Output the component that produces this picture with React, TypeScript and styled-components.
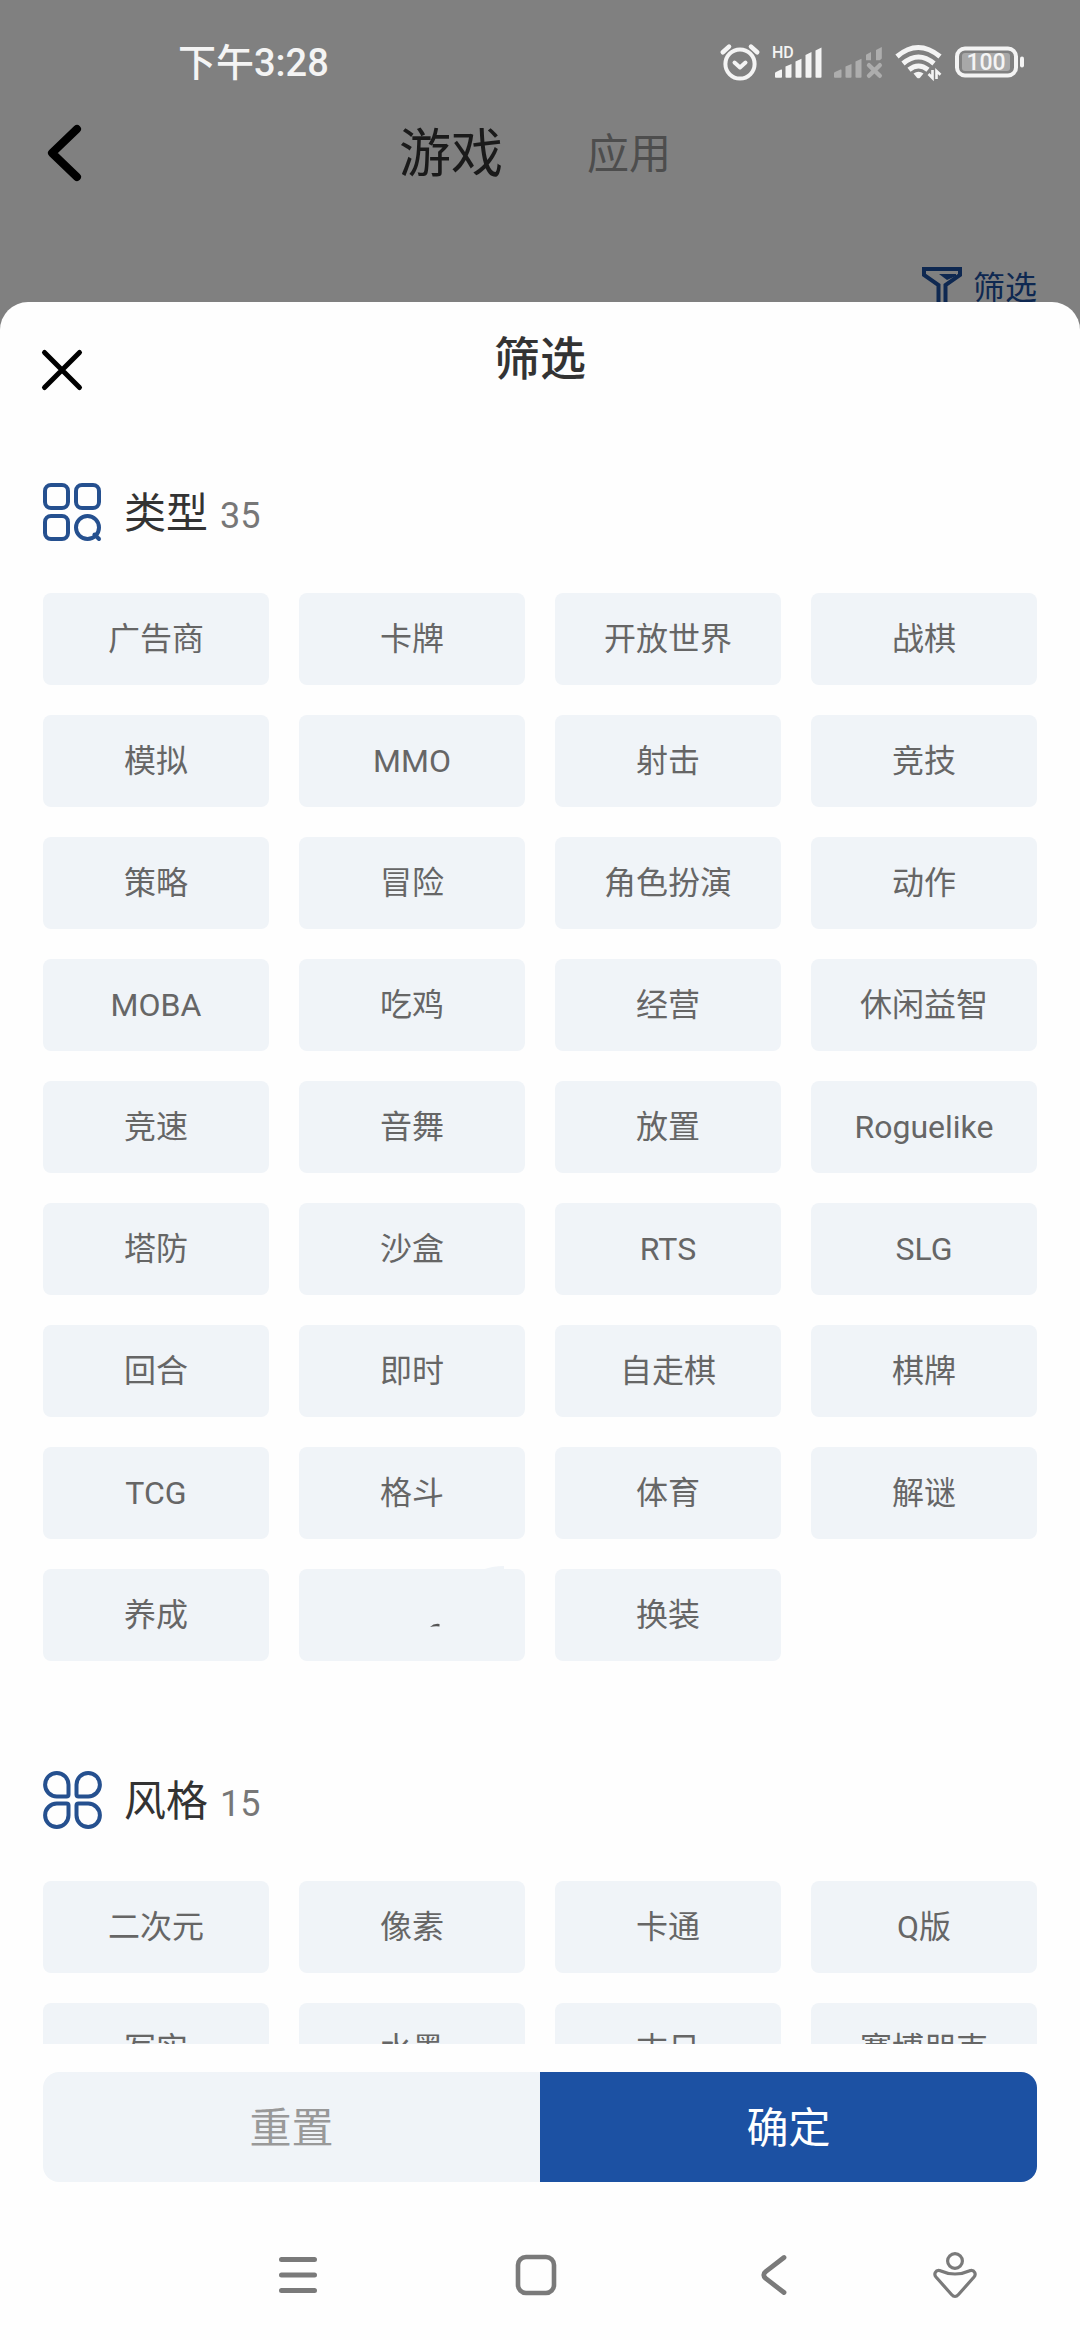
import React from "react";
import styled, { createGlobalStyle } from "styled-components";

const GlobalStyle = createGlobalStyle`
  * { box-sizing: border-box; }
  body {
    margin: 0;
    background: #808080;
    font-family: Roboto, "Noto Sans CJK SC", sans-serif;
  }
  button {
    margin: 0;
    padding: 0;
    border: 0;
    background: none;
    color: inherit;
    font: inherit;
    cursor: pointer;
  }
  h1, h2 { margin: 0; font-weight: 400; }
  svg { display: block; flex: none; overflow: visible; }
`;

const Screen = styled.div`
  display: flex;
  flex-direction: column;
  height: 100vh;
  overflow: hidden;
  background: #808080;
`;

const StatusBar = styled.div`
  display: flex;
  align-items: center;
  justify-content: space-between;
  flex: none;
  height: 100px;
  padding: 24px 55px 0 178px;
  color: #f4f4f4;
`;

const Clock = styled.time`
  padding-top: 2px;
  font-size: 38px;
  font-weight: 500;
  line-height: 44px;
`;

const StatusIcons = styled.div`
  display: flex;
  align-items: center;
  gap: 12px;
`;

const TopBar = styled.header`
  display: grid;
  grid-template-columns: 1fr auto 1fr;
  align-items: center;
  flex: none;
  height: 106px;
  padding: 0 50px 0 40px;
`;

const IconButton = styled.button`
  display: flex;
  align-items: center;
  justify-self: start;
`;

const Tabs = styled.nav`
  display: flex;
  align-items: center;
  gap: 84px;
  padding-top: 4px;
`;

const Tab = styled.button<{ $active?: boolean }>`
  color: ${(p) => (p.$active ? "#1a1a1a" : "#4d4d4d")};
  font-size: ${(p) => (p.$active ? "52px" : "42px")};
  line-height: 64px;
`;

const FilterRow = styled.div`
  display: flex;
  justify-content: flex-end;
  flex: none;
  padding: 58px 43px 0;
`;

const FilterButton = styled.button`
  display: flex;
  align-items: center;
  gap: 11px;
  height: 48px;
  color: #0e2851;
  font-size: 32px;
  line-height: 48px;
`;

const Sheet = styled.section`
  position: relative;
  display: flex;
  flex: 1;
  flex-direction: column;
  min-height: 0;
  margin-top: -10px;
  border-radius: 28px 28px 0 0;
  background: #fefefe;
`;

const SheetHeader = styled.div`
  display: grid;
  grid-template-columns: 1fr auto 1fr;
  align-items: center;
  flex: none;
  height: 110px;
  padding: 0 42px;
`;

const CloseButton = styled(IconButton)`
  align-self: end;
  height: 84px;
`;

const SheetTitle = styled.h1`
  padding-top: 4px;
  color: #333;
  font-size: 46px;
  font-weight: 500;
  line-height: 64px;
`;

const SheetBody = styled.div`
  display: flex;
  flex: 1;
  flex-direction: column;
  gap: 110px;
  min-height: 0;
  padding: 71px 43px 0;
  overflow: hidden;
`;

const Group = styled.section`
  display: flex;
  flex: none;
  flex-direction: column;
  gap: 52px;
`;

const GroupHeader = styled.div`
  display: flex;
  align-items: center;
  gap: 22px;
  height: 58px;
`;

const GroupTitle = styled.h2`
  display: flex;
  align-items: baseline;
  gap: 12px;
  padding-top: 6px;
  color: #333;
  font-size: 42px;
  line-height: 58px;
`;

const Count = styled.span`
  color: #777;
  font-size: 36px;
`;

const ChipGrid = styled.div`
  display: grid;
  grid-template-columns: repeat(4, 1fr);
  gap: 30px;
`;

const Chip = styled.button`
  display: flex;
  align-items: center;
  justify-content: center;
  height: 92px;
  border-radius: 8px;
  background: #f0f4f8;
  color: #666;
  font-size: 32px;
  line-height: 48px;
`;

const Actions = styled.div`
  display: flex;
  flex: none;
  padding: 28px 43px 0;
`;

const ActionButton = styled.button<{ $primary?: boolean }>`
  flex: 1;
  height: 110px;
  padding-top: 4px;
  border-radius: ${(p) => (p.$primary ? "0 16px 16px 0" : "16px 0 0 16px")};
  background: ${(p) => (p.$primary ? "#1c51a3" : "#f0f4f8")};
  color: ${(p) => (p.$primary ? "#fff" : "#999")};
  font-size: 42px;
  line-height: 58px;
`;

const SystemNav = styled.nav`
  display: grid;
  grid-template-columns: 238fr 238fr 238fr 124fr;
  flex: none;
  height: 158px;
  padding: 28px 63px 0 179px;
  color: #7a7a7a;
`;

const NavButton = styled.button`
  display: flex;
  align-items: center;
  justify-content: center;
`;

const AlarmIcon = () => (
  <svg width="40" height="38" viewBox="0 0 40 38" fill="none" stroke="currentColor" strokeWidth="4" strokeLinecap="round" strokeLinejoin="round">
    <circle cx="20" cy="21" r="14.6" />
    <path d="M14.5 19.5l5.5 5 5.5-5" />
    <path d="M2.8 9.2L9 3.6M37.2 9.2L31 3.6" strokeWidth="4.6" />
  </svg>
);

const SignalIcon = () => (
  <svg width="50" height="34" viewBox="0 0 50 34" fill="currentColor">
    <text x="0" y="13" fontSize="16" fontWeight="500" fontFamily="Roboto, sans-serif">HD</text>
    <path d="M3 32v-3.5q0-1 1-1.4l5-2.6q1-.4 1 .6V32q0 .8-1 .8H4q-1 0-1-.8z" />
    <path d="M13.5 32V21.5l6-2.6V32q0 .8-1 .8h-4q-1 0-1-.8z" />
    <path d="M23.5 32V16.5l6-2.8V32q0 .8-1 .8h-4q-1 0-1-.8z" />
    <path d="M33.5 32V10l6-3V32q0 .8-1 .8h-4q-1 0-1-.8z" />
    <path d="M43.5 32V5.5l6-3V32q0 .8-1 .8h-4q-1 0-1-.8z" />
  </svg>
);

const NoSignalIcon = () => (
  <svg width="49" height="34" viewBox="0 0 49 34" fill="#adadad">
    <path d="M0 32v-3.5q0-1 1-1.4l5.500-2.6q1-.4 1 .6V32q0 .8-1 .8H1q-1 0-1-.8z" />
    <path d="M11.5 32V21.5l6-2.6V32q0 .8-1 .8h-4q-1 0-1-.8z" />
    <path d="M21.5 32V16.5l6-2.8V32q0 .8-1 .8h-4q-1 0-1-.8z" />
    <path d="M32 15.2V9.700l5-2.6v8.1zM42 15.2V5l5.800-3v11.5l-2 1.7z" />
    <path d="M35 20.2l10.800 10.6M45.800 20.2L35 30.8" stroke="#adadad" strokeWidth="4.4" strokeLinecap="round" />
  </svg>
);

const WifiIcon = () => (
  <svg width="48" height="36" viewBox="0 0 48 36" fill="none" stroke="currentColor" strokeWidth="5">
    <path d="M2 12.5Q23 -5.5 45 12.5" />
    <path d="M8 19.5Q23.5 6.5 39 19.5" />
    <path d="M14 25.8Q23.500 18.2 33 25.8" />
    <path d="M18.5 29.5q5-3.5 10 0l-3.5 4.2q-1.500 1.300-3 0z" fill="currentColor" stroke="none" />
    <path d="M37.500 26v8l-4-4M41.500 35v-8l4 3.800" strokeWidth="2.6" />
  </svg>
);

const BatteryIcon = () => (
  <svg width="70" height="32" viewBox="0 0 70 32" fill="none">
    <rect x="2" y="2.5" width="59" height="27" rx="8" stroke="currentColor" strokeWidth="4" />
    <rect x="7" y="7" width="48" height="18" rx="3" fill="#a8a8a8" />
    <rect x="65" y="10.5" width="4" height="11" rx="2" fill="currentColor" />
    <text x="31" y="24" textAnchor="middle" fontSize="23" fontWeight="500" fontFamily="Roboto, sans-serif" fill="currentColor">100</text>
  </svg>
);

const BackIcon = () => (
  <svg width="48" height="64" viewBox="0 0 48 64" fill="none" stroke="#000" strokeWidth="8" strokeLinecap="round" strokeLinejoin="round">
    <path d="M37 8L12 32l25 24" />
  </svg>
);

const FunnelIcon = () => (
  <svg width="40" height="44" viewBox="0 0 40 44" fill="none" stroke="currentColor" strokeWidth="4">
    <path d="M2 3h36v6L23.5 19v23h-7V19L2 9z" />
    <path d="M17 8h17v2l-9 4z" fill="currentColor" stroke="none" />
  </svg>
);

const CloseIcon = () => (
  <svg width="40" height="40" viewBox="0 0 40 40" fill="none" stroke="#000" strokeWidth="5" strokeLinecap="round">
    <path d="M2.5 2.5l35 35M37.5 2.5l-35 35" />
  </svg>
);

const TypeIcon = () => (
  <svg width="59" height="58" viewBox="0 0 59 58" fill="none" stroke="#25508f" strokeWidth="4" strokeLinecap="round">
    <rect x="2" y="2" width="23" height="23" rx="6" />
    <rect x="33" y="2" width="23" height="23" rx="6" />
    <rect x="2" y="33" width="23" height="23" rx="6" />
    <circle cx="44.5" cy="44.5" r="11.5" />
    <path d="M51.5 51.5l4.500 4.5" />
  </svg>
);

const StyleIcon = () => (
  <svg width="59" height="58" viewBox="0 0 59 58" fill="none" stroke="#25508f" strokeWidth="4">
    <path d="M13.8 2A11.7 11.7 0 0 1 25.5 13.7V23.4Q25.5 25.4 23.5 25.4H13.8A11.7 11.7 0 0 1 13.8 2z" />
    <path d="M45.2 2A11.7 11.7 0 0 0 33.5 13.7V23.4Q33.5 25.4 35.5 25.4H45.2A11.7 11.7 0 0 0 45.2 2z" />
    <path d="M13.8 56A11.7 11.7 0 0 0 25.5 44.3V34.6Q25.5 32.6 23.5 32.6H13.8A11.7 11.7 0 0 0 13.8 56z" />
    <path d="M45.2 56A11.7 11.7 0 0 1 33.5 44.3V34.6Q33.5 32.6 35.5 32.6H45.2A11.7 11.7 0 0 1 45.2 56z" />
  </svg>
);

/* Brush mark left on the chip whose label is blanked out */
const BlankMark = () => (
  <svg width="226" height="92" viewBox="0 0 226 92" aria-hidden="true">
    <path d="M183 1q10-4 22-4v4z" fill="#f0f4f8" />
    <path d="M131 58q4-4 9.500-3v2.500q-5-.5-9.500.5z" fill="#555" />
  </svg>
);

const MenuIcon = () => (
  <svg width="38" height="38" viewBox="0 0 38 38" stroke="currentColor" strokeWidth="5" strokeLinecap="round">
    <path d="M2.5 3.5h33M2.5 19h33M2.5 34.5h33" />
  </svg>
);

const HomeIcon = () => (
  <svg width="42" height="42" viewBox="0 0 42 42" fill="none" stroke="currentColor" strokeWidth="4.6">
    <rect x="3" y="3" width="36" height="36" rx="8" />
  </svg>
);

const NavBackIcon = () => (
  <svg width="26" height="42" viewBox="0 0 26 42" fill="none" stroke="currentColor" strokeWidth="4.8" strokeLinecap="round" strokeLinejoin="round">
    <path d="M23 3.5L5 17.3q-4.500 3.700 0 7.400L23 38.5" />
  </svg>
);

const PersonIcon = () => (
  <svg width="44" height="48" viewBox="0 0 44 48" fill="none" stroke="currentColor" strokeWidth="3.2" strokeLinejoin="round">
    <circle cx="22" cy="10" r="7.4" />
    <path d="M6.5 19.5Q22 26.5 37.5 19.5C41.5 19 43.5 23 41 26L25.5 43.5Q22 47.5 18.5 43.5L3 26C.5 23 2.5 19 6.5 19.5z" />
  </svg>
);

const GROUPS = [
  {
    name: "类型",
    count: 35,
    Icon: TypeIcon,
    options: [
      "广告商", "卡牌", "开放世界", "战棋",
      "模拟", "MMO", "射击", "竞技",
      "策略", "冒险", "角色扮演", "动作",
      "MOBA", "吃鸡", "经营", "休闲益智",
      "竞速", "音舞", "放置", "Roguelike",
      "塔防", "沙盒", "RTS", "SLG",
      "回合", "即时", "自走棋", "棋牌",
      "TCG", "格斗", "体育", "解谜",
      "养成", "", "换装",
    ],
  },
  {
    name: "风格",
    count: 15,
    Icon: StyleIcon,
    options: ["二次元", "像素", "卡通", "Q版", "写实", "水墨", "末日", "赛博朋克"],
  },
];

export default function App() {
  return (
    <Screen lang="zh-CN">
      <GlobalStyle />
      <StatusBar>
        <Clock>下午3:28</Clock>
        <StatusIcons>
          <AlarmIcon />
          <SignalIcon />
          <NoSignalIcon />
          <WifiIcon />
          <BatteryIcon />
        </StatusIcons>
      </StatusBar>
      <TopBar>
        <IconButton aria-label="返回"><BackIcon /></IconButton>
        <Tabs>
          <Tab $active>游戏</Tab>
          <Tab>应用</Tab>
        </Tabs>
      </TopBar>
      <FilterRow>
        <FilterButton><FunnelIcon />筛选</FilterButton>
      </FilterRow>

      <Sheet>
        <SheetHeader>
          <CloseButton aria-label="关闭"><CloseIcon /></CloseButton>
          <SheetTitle>筛选</SheetTitle>
        </SheetHeader>
        <SheetBody>
          {GROUPS.map(({ name, count, Icon, options }) => (
            <Group key={name}>
              <GroupHeader>
                <Icon />
                <GroupTitle>{name}<Count>{count}</Count></GroupTitle>
              </GroupHeader>
              <ChipGrid>
                {options.map((label, i) => (
                  <Chip key={i} type="button">{label || <BlankMark />}</Chip>
                ))}
              </ChipGrid>
            </Group>
          ))}
        </SheetBody>
        <Actions>
          <ActionButton type="button">重置</ActionButton>
          <ActionButton type="button" $primary>确定</ActionButton>
        </Actions>
        <SystemNav>
          <NavButton aria-label="菜单"><MenuIcon /></NavButton>
          <NavButton aria-label="主页"><HomeIcon /></NavButton>
          <NavButton aria-label="后退"><NavBackIcon /></NavButton>
          <NavButton aria-label="辅助"><PersonIcon /></NavButton>
        </SystemNav>
      </Sheet>
    </Screen>
  );
}
